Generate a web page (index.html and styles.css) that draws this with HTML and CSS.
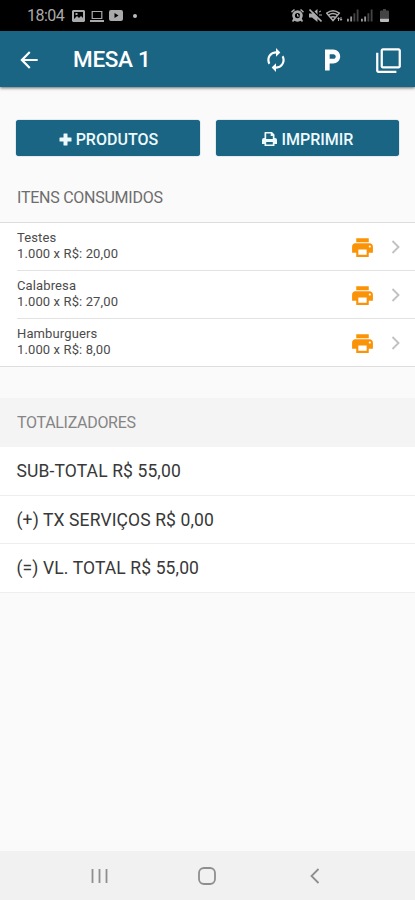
FILE: index.html
```html
<!DOCTYPE html>
<html lang="pt-BR">
<head>
<meta charset="utf-8">
<title>Mesa 1</title>
<link rel="stylesheet" href="styles.css">
</head>
<body>
<svg class="defs" width="0" height="0">
  <symbol id="print" viewBox="0 0 24 24"><path d="M19 8H5c-1.66 0-3 1.34-3 3v6h4v4h12v-4h4v-6c0-1.66-1.34-3-3-3zm-3 11H8v-5h8v5zm3-7c-.55 0-1-.45-1-1s.45-1 1-1 1 .45 1 1-.45 1-1 1zm-1-9H6v4h12V3z"/></symbol>
  <symbol id="chevron" viewBox="0 0 8 14"><path d="M1 1l6 6-6 6" fill="none" stroke="#c2c2c2" stroke-width="1.900"/></symbol>
  <symbol id="signal" viewBox="0 0 13 13"><path d="M0 10h2v3H0zM3.500 7.500h2V13h-2z" fill="#999"/><path d="M7 4h2v9H7zM10.500 0h2v13h-2z" fill="#444"/></symbol>
</svg>
<div class="screen">
  <div class="status">
    <span class="clock">18:04</span>
    <svg class="s-image" width="13" height="12" viewBox="0 0 13 12"><path fill-rule="evenodd" d="M1 0h11l1 1v10l-1 1H1l-1-1V1zM2 2v7l3-3 2 2 2-2 2 2V2zM3.500 3h2v2h-2z"/></svg>
    <svg class="s-laptop" width="14" height="12" viewBox="0 0 14 12"><path d="M2.200 1.500h9.600v7H2.200z" fill="none" stroke="#aaa" stroke-width="1.200"/><path d="M0 10h14v2H0z"/></svg>
    <svg class="s-video" width="14" height="11" viewBox="0 0 14 11"><path fill-rule="evenodd" d="M2 0h10q2 0 2 2v7q0 2-2 2H2q-2 0-2-2V2q0-2 2-2zM5.500 3v5L9.500 5.500z"/></svg>
    <span class="dot"></span>
    <svg class="s-alarm" width="13" height="13" viewBox="0 0 13 13"><path fill-rule="evenodd" d="M0 2.500L3 0l1 1-3 2.700zM13 2.500L10 0 9 1l3 2.700zM6.500 1.200a5.300 5.300 0 0 1 4.300 8.300L12 12l-1 1-1.600-1.300a5 5 0 0 1-5.800 0L2 13l-1-1 1.200-2.500a5.300 5.300 0 0 1 4.300-8.300zm0 2.800a2.600 2.600 0 1 0 0 5.200 2.600 2.600 0 0 0 0-5.200zM6 5h1v1.500h1.500v1H6z"/></svg>
    <svg class="s-mute" width="13" height="13" viewBox="0 0 13 13"><path d="M0 4.500h3L8.500 0v13L3 8.500H0z"/><path d="M0 0l13 13" stroke="#000" stroke-width="1.500" transform="translate(1 -1)"/><path d="M.5 .5l12 12" stroke="#aaa" stroke-width="1.600"/><path d="M10 3l2-1M10 6h3" stroke="#aaa"/></svg>
    <svg class="s-wifi" width="17" height="12" viewBox="0 0 17 12"><g fill="none" stroke="#aaa" stroke-width="1.500"><path d="M.7 3.200Q7 -1.500 13.300 3.200L7 10.500z"/><path d="M2.500 5.200Q7 2 11.500 5.200M4.600 7.500Q7 6 9.500 7.500"/></g><path d="M11 9l1.500-2 1.500 2zM13.500 9l1.500 2 1.500-2zM12 9h1v2h-1zM14.500 7h1v2h-1z"/></svg>
    <svg class="s-sig1" width="12" height="13"><use href="#signal"/></svg>
    <svg class="s-sig2" width="12" height="13"><use href="#signal"/></svg>
    <svg class="s-batt" width="9" height="13" viewBox="0 0 9 13"><path d="M3 0h3v1.500h2q1 0 1 1V9H0V2.500q0-1 1-1h2z" fill="#444"/><path d="M0 9.500h9V12q0 1-1 1H1q-1 0-1-1z" fill="#bbb"/></svg>
  </div>
  <header class="bar">
    <svg class="back" width="26" height="26" viewBox="0 0 24 24"><path d="M20 11H7.830l5.590-5.590L12 4l-8 8 8 8 1.410-1.410L7.830 13H20v-2z"/></svg>
    <h1>MESA 1</h1>
    <svg class="renew" width="28" height="26" viewBox="0 0 24 24"><path d="M12 6v3l4-4-4-4v3c-4.420 0-8 3.580-8 8 0 1.570.46 3.030 1.240 4.260L6.700 14.800c-.45-.83-.7-1.790-.7-2.800 0-3.310 2.690-6 6-6zm6.760 1.740L17.300 9.200c.44.840.7 1.790.7 2.800 0 3.310-2.690 6-6 6v-3l-4 4 4 4v-3c4.420 0 8-3.580 8-8 0-1.570-.46-3.030-1.240-4.260z"/></svg>
    <svg class="park" width="28" height="28" viewBox="0 0 24 24"><path d="M13 3H6v18h4v-6h3c3.310 0 6-2.690 6-6s-2.690-6-6-6zm.2 8H10V7h3.200c1.100 0 2 .9 2 2s-.9 2-2 2z"/></svg>
    <svg class="copy" width="27" height="27" viewBox="0 0 24 24"><path d="M3 5H1v16c0 1.100.9 2 2 2h16v-2H3V5zm18-4H7c-1.100 0-2 .9-2 2v14c0 1.100.9 2 2 2h14c1.100 0 2-.9 2-2V3c0-1.100-.9-2-2-2zm0 16H7V3h14v14z"/></svg>
  </header>
  <main>
    <div class="actions">
      <button><svg width="13" height="13" viewBox="0 0 13 13"><path d="M5 .5h3q.5 0 .5.500v3.500H12q.5 0 .5.500v3q0 .5-.5.500H8.500V12q0 .5-.5.500H5q-.5 0-.5-.5V8.500H1Q.5 8.500.5 8V5q0-.5.500-.5h3.500V1q0-.5.500-.5z"/></svg><span>PRODUTOS</span></button>
      <button><svg width="15" height="14" viewBox="0 0 15 14"><path fill-rule="evenodd" d="M3 0h7l2.500 2.500V6H13q2 0 2 2v4h-2.500v2h-10v-2H0V8q0-2 2-2h.5V.5zM4.200 1.600V7h6.600V4H8.700V1.600zM4.200 10v2.400h6.600V10z"/></svg><span>IMPRIMIR</span></button>
    </div>
    <h2 class="h-items">ITENS CONSUMIDOS</h2>
    <ul class="items">
      <li><div class="item"><p>Testes<br>1.000 x R$: 20,00</p><svg class="printer"><use href="#print"/></svg><svg class="chev"><use href="#chevron"/></svg></div></li>
      <li><div class="item"><p>Calabresa<br>1.000 x R$: 27,00</p><svg class="printer"><use href="#print"/></svg><svg class="chev"><use href="#chevron"/></svg></div></li>
      <li><div class="item"><p>Hamburguers<br>1.000 x R$: 8,00</p><svg class="printer"><use href="#print"/></svg><svg class="chev"><use href="#chevron"/></svg></div></li>
    </ul>
    <h2 class="h-totals">TOTALIZADORES</h2>
    <ul class="totals">
      <li>SUB-TOTAL R$ 55,00</li>
      <li>(+) TX SERVIÇOS R$ 0,00</li>
      <li>(=) VL. TOTAL R$ 55,00</li>
    </ul>
  </main>
  <nav>
    <svg width="17" height="16" viewBox="0 0 17 16"><path d="M1.500 1v14M8.500 1v14M15.500 1v14"/></svg>
    <svg class="home" width="18" height="18" viewBox="0 0 18 18"><rect x="1" y="1" width="16" height="16" rx="5"/></svg>
    <svg width="10" height="16" viewBox="0 0 10 16"><path d="M8.500 1L1.500 8l7 7"/></svg>
  </nav>
</div>
</body>
</html>
```
FILE: styles.css
```css
* { box-sizing: border-box; }
body, h1, h2, p, ul { margin: 0; padding: 0; }
ul { list-style: none; }
body { font-family: Roboto, "Liberation Sans", sans-serif; background: #fafafa; }
svg { display: block; flex: none; }
.defs { position: absolute; }
.screen { width: 415px; height: 900px; display: flex; flex-direction: column; overflow: hidden; }

.status { height: 31px; flex: none; background: #000; color: #aaa; display: flex; align-items: center; padding-left: 27px; }
.status svg { fill: #aaa; }
.clock { width: 45px; font-size: 16px; letter-spacing: -0.5px; line-height: 31px; }
.s-laptop { margin-left: 5px; }
.s-video { margin-left: 5px; }
.dot { width: 4px; height: 4px; border-radius: 50%; background: #bbb; margin-left: 10px; }
.s-alarm { margin-left: 154px; }
.s-mute { margin-left: 5px; }
.s-wifi { margin-left: 4px; }
.s-sig1 { margin-left: 4px; }
.s-sig2 { margin-left: 2px; }
.s-batt { margin-left: 7px; }

.bar { height: 56px; flex: none; background: #196583; color: #fff; display: flex; align-items: center; padding: 2px 13px 0 16px; box-shadow: 0 1px 3px rgba(0, 0, 0, .6); z-index: 1; }
.bar svg { fill: #fff; }
.bar h1 { margin: -3px auto 0 31px; font-size: 22.5px; font-weight: 500; letter-spacing: -0.3px; line-height: 30px; }
.renew { margin-right: 28px; }
.park { margin-right: 29px; }

main { flex: 1; }
.actions { display: grid; grid-template-columns: 184px 183px; gap: 16px; padding: 33px 15px 0 16.4px; }
button { height: 36px; padding: 2px 0 0; border: 0; border-radius: 3px; background: #196583; color: #eef9fd; font: 500 16px Roboto, "Liberation Sans", sans-serif; display: flex; align-items: center; justify-content: center; gap: 4px; box-shadow: 0 0 1px #196583; }
button svg { fill: #eef9fd; }
h2 { font-size: 16px; font-weight: 400; letter-spacing: -0.25px; color: #6d6d6d; padding-left: 17px; }
.h-items { height: 66px; padding-top: 31px; line-height: 21px; }
.items { background: #fff; border-top: 1px solid #ddd; border-bottom: 1px solid #ddd; }
.items li { padding-left: 17px; }
.item { height: 47px; display: flex; align-items: center; padding-right: 15px; }
.items li + li .item { height: 48px; border-top: 1px solid #e2e2e2; }
.items p { flex: 1; margin-top: -1px; font-size: 13px; letter-spacing: 0.120px; line-height: 16px; color: #4b4b4b; }
.printer { width: 27px; height: 25px; fill: #fb9307; margin: 2px 15px 0 0; }
.chev { width: 9px; height: 14px; margin-top: 1px; }
.h-totals { margin-top: 31px; height: 49px; line-height: 49px; background: #f4f4f4; color: #858585; letter-spacing: -0.3px; }
.totals li { height: 48.500px; line-height: 49px; padding-left: 16.5px; font-size: 17.500px; letter-spacing: 0.120px; color: #383838; background: #fff; border-bottom: 1px solid #eee; }

nav { height: 49px; flex: none; background: #f1f1f1; display: flex; align-items: center; padding: 1px 95px 0 91px; justify-content: space-between; }
nav svg { fill: none; stroke: #8e8e8e; stroke-width: 1.800; }
.home { margin-right: 4px; }
```
